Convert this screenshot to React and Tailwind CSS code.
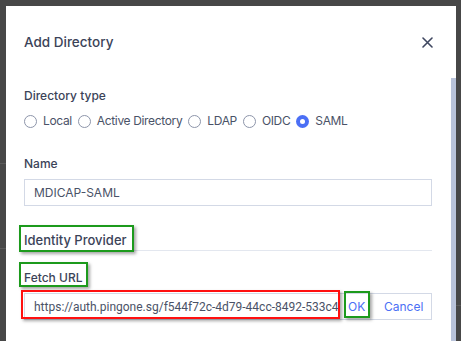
import React from "react";

const Radio = ({ label, checked }) => (
  <label className="flex items-center gap-[6px]">
    {checked ? (
      <span className="w-[13px] h-[13px] rounded-full bg-[#4b6ff5] flex items-center justify-center">
        <span className="w-[5px] h-[5px] rounded-full bg-white" />
      </span>
    ) : (
      <span className="w-[13px] h-[13px] rounded-full border border-[#8d95aa] bg-white" />
    )}
    <span className="text-[12px] leading-[14px] tracking-[-0.35px] text-[#4a5267]">{label}</span>
  </label>
);

export default function App() {
  const font = { fontFamily: "Inter, 'Noto Sans', sans-serif" };
  return (
    <div className="relative w-[461px] h-[341px] bg-[#474747] overflow-hidden" style={font}>
      <div className="absolute left-0 top-[163px] w-[6px] h-px bg-[#5a5a5a]" />
      <div className="absolute left-0 top-[248px] w-[6px] h-px bg-[#5a5a5a]" />
      <div className="absolute right-0 top-[305px] w-[5px] h-px bg-[#5a5a5a]" />

      <div className="relative ml-[6px] mt-[6px] w-[450px] h-[335px] bg-white flex">
        <div className="flex-1 pl-[18px] pr-[19px] pt-[28px] flex flex-col">
          <div className="flex items-center justify-between h-[16px]">
            <div className="text-[13.5px] font-medium text-[#3b4358] leading-[16px]">Add Directory</div>
            <svg width="11" height="11" viewBox="0 0 11 11" className="mr-[-1px]">
              <path d="M1 1L10 10M10 1L1 10" stroke="#3f4760" strokeWidth="1.6" strokeLinecap="round" />
            </svg>
          </div>

          <div className="mt-[38px] text-[12px] leading-[16px] font-medium text-[#3b4358]">Directory type</div>
          <div className="mt-[10px] flex items-center gap-[6px]">
            <Radio label="Local" />
            <Radio label="Active Directory" />
            <Radio label="LDAP" />
            <Radio label="OIDC" />
            <Radio label="SAML" checked />
          </div>

          <div className="mt-[28px] text-[12px] leading-[16px] font-medium text-[#3b4358]">Name</div>
          <div className="mt-[7px] h-[27px] border border-[#d3d9e6] flex items-center px-[9px] text-[12px] text-[#4a5267]">
            MDICAP-SAML
          </div>

          <div className="mt-[26px] text-[13px] leading-[16px] font-medium text-[#3b4358] pb-[2px] border-b border-[#e3e7ef]">
            Identity Provider
          </div>

          <div className="mt-[19px] text-[12px] leading-[16px] font-medium text-[#3b4358]">Fetch URL</div>
          <div className="mt-[7px] h-[27px] flex border border-[#d3d9e6]">
            <div className="w-[313px] flex items-center pl-[9px] overflow-hidden whitespace-nowrap text-[12px] text-[#4a5267]" style={{ fontFamily: "Roboto, 'Liberation Sans', sans-serif" }}>
              https://auth.pingone.sg/f544f72c-4d79-44cc-8492-533c4ab7
            </div>
            <div className="w-[33px] flex items-center pl-[10px] text-[12px] text-[#4b6ff5]">OK</div>
            <div className="flex-1 flex items-center pl-[13px] text-[12px] text-[#4b6ff5]">Cancel</div>
          </div>
        </div>
        <div className="w-[5px] flex flex-col">
          <div className="mt-[72px] flex-1 bg-[#b9c3da]" />
        </div>

        <div className="absolute left-[13px] top-[219px] w-[115px] h-[27px] border-2 border-[#1c9a1c] shadow-[2px_2px_3px_rgba(0,0,0,0.35)]" />
        <div className="absolute left-[13px] top-[256px] w-[69px] h-[25px] border-2 border-[#1c9a1c] shadow-[2px_2px_3px_rgba(0,0,0,0.35)]" />
        <div className="absolute left-[15px] top-[284px] w-[319px] h-[29px] border-2 border-[#ff1010] shadow-[2px_2px_3px_rgba(0,0,0,0.35)]" />
        <div className="absolute left-[338px] top-[285px] w-[26px] h-[27px] border-2 border-[#1c9a1c] shadow-[2px_2px_3px_rgba(0,0,0,0.35)]" />
      </div>
    </div>
  );
}
